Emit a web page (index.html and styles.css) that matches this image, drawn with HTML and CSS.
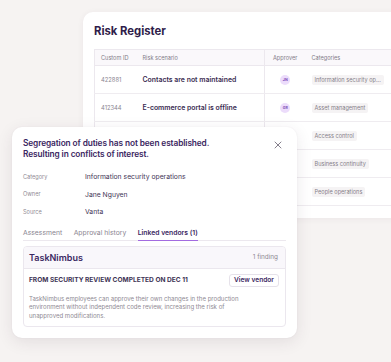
FILE: index.html
```html
<!DOCTYPE html>
<html lang="en">
  <head>
    <meta charset="UTF-8" />
    <meta name="viewport" content="width=device-width, initial-scale=1.0" />
    <title>Risk Register</title>
    <link rel="stylesheet" href="styles.css">
  </head>
  <body>
    <div class="stage">
      <div class="register">
        <h1 class="register-title">Risk Register</h1>
        <table class="risk-table">
          <thead>
            <tr>
              <th class="col-id">Custom ID</th>
              <th class="col-scenario">Risk scenario</th>
              <th class="col-approver">Approver</th>
              <th class="col-cat">Categories</th>
            </tr>
          </thead>
          <tbody>
            <tr>
              <td class="cell-id">422881</td>
              <td class="cell-scenario">Contacts are not maintained</td>
              <td class="cell-approver"><span class="avatar">JN</span></td>
              <td><span class="chip">Information security op...</span></td>
            </tr>
            <tr>
              <td class="cell-id">412344</td>
              <td class="cell-scenario">E-commerce portal is offline</td>
              <td class="cell-approver"><span class="avatar">GR</span></td>
              <td><span class="chip">Asset management</span></td>
            </tr>
            <!-- rows below sit under the modal, only categories show -->
            <tr>
              <td class="cell-id"></td>
              <td class="cell-scenario"></td>
              <td class="cell-approver"></td>
              <td><span class="chip">Access control</span></td>
            </tr>
            <tr>
              <td class="cell-id"></td>
              <td class="cell-scenario"></td>
              <td class="cell-approver"></td>
              <td><span class="chip">Business continuity</span></td>
            </tr>
            <tr>
              <td class="cell-id"></td>
              <td class="cell-scenario"></td>
              <td class="cell-approver"></td>
              <td><span class="chip">People operations</span></td>
            </tr>
          </tbody>
        </table>
      </div>

      <div class="modal">
        <div class="modal-head">
          <h2 class="modal-title">Segregation of duties has not been established. Resulting in conflicts of interest.</h2>
          <a href="#" class="close">
            <svg width="8" height="8" viewBox="0 0 8 8"><path d="M1 1L7 7M7 1L1 7" stroke="#77707f" stroke-width="0.9" stroke-linecap="round"/></svg>
          </a>
        </div>
        <dl class="fields">
          <dt>Category</dt><dd>Information security operations</dd>
          <dt>Owner</dt><dd>Jane Nguyen</dd>
          <dt>Source</dt><dd>Vanta</dd>
        </dl>
        <div class="tabs">
          <a href="#" class="tab">Assessment</a>
          <a href="#" class="tab">Approval history</a>
          <a href="#" class="tab on">Linked vendors (1)</a>
        </div>
        <div class="vendor">
          <div class="vendor-head">
            <span class="vendor-name">TaskNimbus</span>
            <span class="vendor-count">1 finding</span>
          </div>
          <div class="vendor-body">
            <div class="finding-row">
              <span class="finding-source">From security review completed on Dec 11</span>
              <a href="#" class="view-btn">View vendor</a>
            </div>
            <p class="finding-text">TaskNimbus employees can approve their own changes in the production environment without independent code review, increasing the risk of<br>unapproved modifications.</p>
          </div>
        </div>
      </div>
    </div>
  </body>
</html>
```

FILE: styles.css
```css
* {
  margin: 0;
  padding: 0;
  box-sizing: border-box;
  text-decoration: none;
}
body {
  background: #f6f3f2;
  font-family: Inter, "Noto Sans", sans-serif;
  overflow: hidden;
  height: 362px;
}
.stage {
  position: relative;
  height: 362px;
  padding-top: 12px;
}
.register {
  width: 330px;
  margin-left: 83px;
  padding: 12px 0 12px 11px;
  background: #fff;
  border-radius: 10px;
  box-shadow: 0 1px 6px rgba(60, 40, 60, 0.06);
  overflow: hidden;
}
.register-title {
  font-size: 11.3px;
  line-height: 14px;
  font-weight: 700;
  color: #2f1d4a;
  margin-bottom: 11px;
}
.risk-table {
  width: 400px;
  border-collapse: collapse;
  table-layout: fixed;
  border: 1px solid #ece8ee;
}
.risk-table th {
  height: 16px;
  padding: 0 6px;
  background: #faf8fb;
  border-bottom: 1px solid #ece8ee;
  font-size: 5.6px;
  font-weight: 400;
  color: #827c88;
  text-align: left;
}
.risk-table td {
  height: 28px;
  padding: 0 6px;
  border-bottom: 1px solid #efecf0;
  font-size: 5.8px;
  color: #8a8590;
}
.col-id {
  width: 42px;
}
.col-scenario {
  width: 128px;
}
.col-approver {
  width: 41px;
}
.risk-table .col-scenario,
.risk-table .cell-scenario {
  border-right: 1px solid #ece8ee;
}
.risk-table .col-approver {
  padding-left: 8px;
}
.risk-table .cell-scenario {
  font-weight: 600;
  color: #3a2c52;
  font-size: 6.9px;
}
.cell-approver {
  text-align: center;
}
.avatar {
  display: inline-block;
  width: 10px;
  height: 10px;
  line-height: 10px;
  border-radius: 50%;
  background: #ecdcfb;
  color: #7a4bb5;
  font-size: 3.6px;
  font-weight: 700;
  text-align: center;
  vertical-align: middle;
}
.chip {
  display: inline-block;
  padding: 2px 3px;
  background: #f5f3f4;
  border-radius: 2px;
  font-size: 5.6px;
  color: #858089;
}

.modal {
  position: absolute;
  left: 12px;
  top: 127px;
  width: 285px;
  padding: 11px;
  background: #fff;
  border-radius: 10px;
  box-shadow: 0 4px 16px rgba(60, 40, 60, 0.1), 0 0 2px rgba(60, 40, 60, 0.06);
}
.modal-head {
  display: flex;
  justify-content: space-between;
  align-items: flex-start;
}
.modal-title {
  font-size: 8.3px;
  line-height: 10.5px;
  letter-spacing: -0.1px;
  font-weight: 600;
  color: #3b2761;
  width: 212px;
}
.close {
  display: block;
  margin: 3px 4px 0 0;
  line-height: 0;
}
.fields {
  display: grid;
  grid-template-columns: 62px auto;
  grid-auto-rows: 17.5px;
  align-items: center;
  margin-top: 9px;
}
.fields dt {
  font-size: 5.6px;
  color: #8f8a94;
}
.fields dd {
  font-size: 6.8px;
  color: #3f3556;
}
.tabs {
  display: flex;
  gap: 11.5px;
  margin-top: 6px;
  border-bottom: 1px solid #ece8ee;
}
.tab {
  padding: 1px 0 3px;
  font-size: 6.8px;
  line-height: 9px;
  color: #8a8590;
  border-bottom: 1px solid transparent;
  margin-bottom: -1px;
}
.tab.on {
  color: #3b2761;
  font-weight: 600;
  border-bottom: 1.5px solid #a36be0;
}
.vendor {
  margin-top: 5px;
  border: 1px solid #ebe7ee;
  border-radius: 4px;
  overflow: hidden;
}
.vendor-head {
  display: flex;
  justify-content: space-between;
  align-items: center;
  height: 22px;
  padding: 0 7px 0 5px;
  background: #f9f7fb;
  border-bottom: 1px solid #ebe7ee;
}
.vendor-name {
  font-size: 9px;
  font-weight: 600;
  color: #3b2761;
}
.vendor-count {
  font-size: 6.4px;
  color: #8f8a94;
}
.vendor-body {
  padding: 5px 6px 5px 5px;
}
.finding-row {
  display: flex;
  justify-content: space-between;
  align-items: center;
}
.finding-source {
  text-transform: uppercase;
  font-size: 6.6px;
  font-weight: 700;
  color: #3f3556;
}
.view-btn {
  display: block;
  padding: 1px 4px;
  border: 1px solid #e6e2ea;
  border-radius: 3px;
  font-size: 6.6px;
  line-height: 9px;
  font-weight: 600;
  color: #3b2761;
}
.finding-text {
  max-width: 240px;
  margin-top: 8px;
  font-size: 6.05px;
  line-height: 8.7px;
  color: #8f8a94;
}
```
